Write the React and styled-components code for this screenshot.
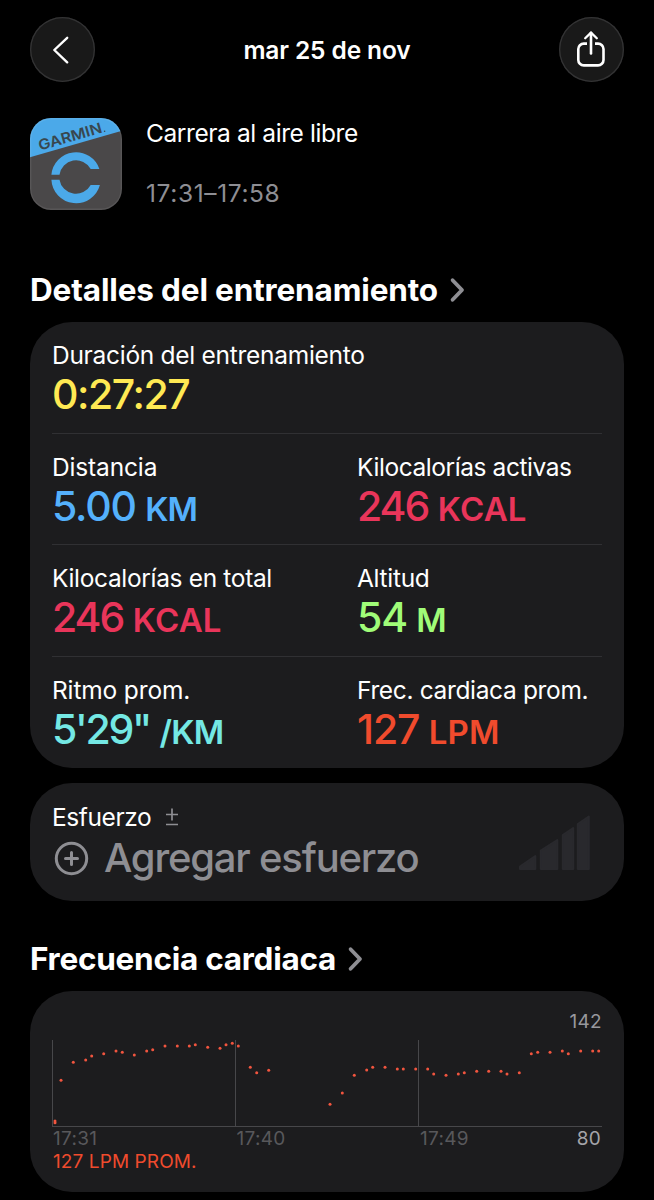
import React from 'react';
import styled, { createGlobalStyle } from 'styled-components';

const GlobalStyle = createGlobalStyle`
    body {
        margin: 0;
        background: #000;
        color: #fff;
        font-family: Inter, "Liberation Sans", sans-serif;
        -webkit-font-smoothing: antialiased;
    }
`;

const Page = styled.main`
    box-sizing: border-box;
    width: 654px;
    height: 1200px;
    padding: 17px 30px 0;
    overflow: hidden;
    background: #000;
`;

const TopBar = styled.header`
    display: flex;
    align-items: center;
    justify-content: space-between;
    height: 65px;
`;

const RoundButton = styled.button`
    width: 65px;
    height: 65px;
    padding: 0;
    border: none;
    border-radius: 50%;
    background: #191919;
    box-shadow: inset 0 0 0 1.3px #333334;

    svg {
        display: block;
    }
`;

const Title = styled.h1`
    margin: 1px 0 0;
    font-size: 24.5px;
    font-weight: 600;
    line-height: 30px;
    letter-spacing: -0.11px;
`;

const Activity = styled.section`
    display: flex;
    gap: 24px;
    margin-top: 36px;
`;

const ActivityText = styled.div`
    display: flex;
    flex-direction: column;
    gap: 30px;
`;

const Text = styled.span`
    font-size: 24.5px;
    line-height: 30px;
    white-space: nowrap;
    color: ${props => props.color || "#fff"};
    letter-spacing: ${props => props.$spacing || 0}px;
`;

const Heading = styled.h2`
    display: flex;
    align-items: center;
    gap: 11px;
    margin: ${props => props.$top}px 0 12px;
    font-size: 31.5px;
    font-weight: 700;
    line-height: 40px;
    letter-spacing: ${props => props.$spacing}px;
`;

const Card = styled.section`
    box-sizing: border-box;
    height: ${props => props.$height}px;
    padding: ${props => props.$top || 0}px 22px 0;
    border-radius: 42px;
    background: #1c1c1e;
`;

const Row = styled.div`
    box-sizing: border-box;
    display: grid;
    grid-template-columns: 305px 1fr;
    height: 111.6px;
    padding-top: 18px;
    border-bottom: 1px solid #303033;

    &:last-child {
        border-bottom: none;
    }
`;

const Metric = styled.div`
    display: flex;
    flex-direction: column;
    white-space: nowrap;
`;

const Value = styled.div`
    display: flex;
    align-items: baseline;
    gap: 9.5px;
    color: ${props => props.color};
    font-size: 41px;
    font-weight: 500;
    line-height: 48px;
    letter-spacing: ${props => props.$spacing}px;
`;

const Unit = styled.span`
    font-size: 33px;
    font-weight: 600;
    letter-spacing: ${props => props.$spacing}px;
`;

const EffortCard = styled(Card)`
    display: flex;
    justify-content: space-between;
    margin-top: 15px;
`;

const EffortLabel = styled.div`
    display: flex;
    align-items: center;
    gap: 14px;
    height: 32px;
`;

const AddEffort = styled.div`
    display: flex;
    align-items: center;
    gap: 14px;
    margin-top: 1px;
    color: #8e8e93;
    font-size: 40px;
    font-weight: 500;
    line-height: 48px;
    letter-spacing: -1.2px;
    white-space: nowrap;
`;

const Bars = styled.svg`
    margin: 13px 11px 0 0;
`;

const Small = styled.div`
    font-size: 19px;
    line-height: 24px;
    white-space: nowrap;
    color: ${props => props.color};
    letter-spacing: ${props => props.$spacing || 0.3}px;
    text-align: ${props => props.$align || "left"};
`;

const Axis = styled.div`
    display: grid;
    grid-template-columns: 183.5px 183.5px 1fr auto;
    padding: 1px 1px 0;
`;

const Average = styled(Small)`
    padding-left: 1px;
    line-height: 22px;
`;

const Plot = styled.svg`
    display: block;
    overflow: visible;
`;

const metrics = [
    [
        { label: "Duración del entrenamiento", ls: -0.28, value: "0:27:27", vs: -1.45, color: "#ffe953" }
    ],
    [
        { label: "Distancia", ls: -0.15, value: "5.00", vs: -1.2, unit: "KM", us: -1, color: "#54b0fb" },
        { label: "Kilocalorías activas", ls: -0.43, value: "246", vs: -2, unit: "KCAL", us: 0.18, color: "#e9355a" }
    ],
    [
        { label: "Kilocalorías en total", ls: -0.34, value: "246", vs: -2, unit: "KCAL", us: 0.18, color: "#e9355a" },
        { label: "Altitud", ls: -0.3, value: "54", vs: -1.2, unit: "M", us: 0, color: "#a0fc78" }
    ],
    [
        { label: "Ritmo prom.", ls: -0.15, value: "5'29\"", vs: -2.3, unit: "/KM", us: -0.7, color: "#74e8e4" },
        { label: "Frec. cardiaca prom.", ls: -0.35, value: "127", vs: -1.14, unit: "LPM", us: 0.1, color: "#f04b2d" }
    ]
];

// x, y inside the 550 x 93 plot
const beats = [
    [3, 87], [3, 88.7], [9, 46.3], [21.3, 28.3], [33.7, 26], [39.7, 22], [51.7, 19.7],
    [64, 17], [70.3, 18.3], [82.3, 21], [94.7, 17], [100.7, 15.7], [113, 12],
    [125.3, 12], [137.3, 12], [143.3, 10.7], [155.7, 13.3], [168, 14.3],
    [174, 10.7], [180.3, 9.3], [186.3, 12], [198.3, 33.3], [204.7, 38.7],
    [216.7, 36.3], [278, 70.3], [290.3, 59], [302.3, 41.3], [314.7, 36],
    [320.7, 33.3], [333, 33.3], [345.3, 35], [351.3, 35], [363.7, 35],
    [375.7, 35], [381.7, 40], [394, 41.3], [406.3, 40], [412.3, 38.7],
    [424.7, 37.3], [436.7, 37.3], [449, 37.3], [455, 40], [467.3, 38.7],
    [479.3, 19.7], [485.7, 18.3], [498, 18.3], [510.3, 17], [516.3, 19.7],
    [528.7, 17], [540.7, 17], [546.7, 17]
];

const BackIcon = () => (
    <svg width="65" height="65" fill="none" stroke="#fff" strokeWidth="2.4" strokeLinecap="round" strokeLinejoin="round">
        <path d="M37.2 20.8 24.3 33 37.2 45.3" />
    </svg>
);

const ShareIcon = () => (
    <svg width="65" height="65" fill="none" stroke="#fff" strokeWidth="2.6" strokeLinecap="round" strokeLinejoin="round">
        <path strokeLinecap="butt" d="M28 26.6h-3.2a5.5 5.5 0 0 0-5.5 5.5v10.8a5.5 5.5 0 0 0 5.5 5.5h14.2a5.5 5.5 0 0 0 5.5-5.5v-10.8a5.5 5.5 0 0 0-5.5-5.5h-3" />
        <path d="M32 36.5V15.8" />
        <path strokeWidth="2.3" d="M26.2 21.3 32 15.6l5.8 5.7" />
    </svg>
);

const Chevron = () => (
    <svg width="16" height="26" fill="none" stroke="#8e8e93" strokeWidth="3.8" strokeLinecap="round" strokeLinejoin="round">
        <path d="M3.6 3.2 13 13l-9.4 9.8" />
    </svg>
);

const GarminIcon = () => (
    <svg width="92" height="92" viewBox="0 0 92 92">
        <clipPath id="tile">
            <rect width="92" height="92" rx="21" />
        </clipPath>
        <g clipPath="url(#tile)">
            <rect width="92" height="92" fill="#4a4849" />
            <path d="M0 0h92v12.7L0 39.3z" fill="#4ba9e9" />
            <rect x=".7" y=".7" width="90.6" height="90.6" rx="20.4" fill="none" stroke="#fff" strokeOpacity=".08" strokeWidth="1.4" />
        </g>
        <text transform="translate(10 32.6) rotate(-16.1)" fill="#38474f" fontFamily="Inter" fontSize="14.5" fontWeight="600" textLength="65.5" lengthAdjust="spacingAndGlyphs">GARMIN</text>
        <circle cx="74.6" cy="13.3" r=".8" fill="#38474f" />
        <g fill="#4ba9e9">
            <path d="M21.4 56.7A24.7 24.7 0 0 1 69.4 51H60.7A16.7 16.7 0 0 0 29.5 56.7z" />
            <path d="M21.4 61.7A24.7 24.7 0 0 0 69.9 67H60.7A16.7 16.7 0 0 1 29.5 61.7z" />
        </g>
    </svg>
);

const EffortBars = () => (
    <Bars width="73" height="58" fill="#29292d" stroke="#29292d" strokeWidth="2" strokeLinejoin="round">
        <path d="M2 52.5 17.3 42V55H2z" />
        <path d="M22.8 36.5 39.3 26V55H22.8z" />
        <path d="M44.8 21 55.2 14V55H44.8z" />
        <path d="M59.8 10 70.8 2.5V55h-11z" />
    </Bars>
);

const MetricCell = ({ item }) => (
    <Metric>
        <Text $spacing={item.ls}>{item.label}</Text>
        <Value color={item.color} $spacing={item.vs}>
            <span>{item.value}</span>
            {item.unit && <Unit $spacing={item.us}>{item.unit}</Unit>}
        </Value>
    </Metric>
);

const HeartChart = () => (
    <Plot width="550" height="92">
        <path d="M.5 6V92M183.5 6V92M366.5 6V92M0 92.5H550" stroke="#47474a" fill="none" />
        {beats.map(([x, y], i) => (
            <circle key={i} cx={x} cy={y} r="1.5" fill="#f2553f" />
        ))}
    </Plot>
);

const App = () => {
    return (
        <>
            <GlobalStyle />
            <Page>
                <TopBar>
                    <RoundButton aria-label="Atrás"><BackIcon /></RoundButton>
                    <Title>mar 25 de nov</Title>
                    <RoundButton aria-label="Compartir"><ShareIcon /></RoundButton>
                </TopBar>
                <Activity>
                    <GarminIcon />
                    <ActivityText>
                        <Text $spacing={-0.41}>Carrera al aire libre</Text>
                        <Text color="#8e8e93" $spacing={0.62}>17:31–17:58</Text>
                    </ActivityText>
                </Activity>

                <Heading $top={60} $spacing={-0.15}>Detalles del entrenamiento <Chevron /></Heading>
                <Card $height={446}>
                    {metrics.map((row, i) => (
                        <Row key={i}>
                            {row.map(item => <MetricCell key={item.label} item={item} />)}
                        </Row>
                    ))}
                </Card>

                <EffortCard $height={118} $top={18}>
                    <div>
                        <EffortLabel>
                            <Text $spacing={-0.4}>Esfuerzo</Text>
                            <svg width="14" height="18" fill="none" stroke="#8e8e93" strokeWidth="1.7">
                                <path d="M1 6.5H13M7 .5V12.5M1 16.5H13" />
                            </svg>
                        </EffortLabel>
                        <AddEffort>
                            <svg width="38" height="38" fill="none" stroke="#8e8e93" strokeWidth="3" strokeLinecap="round">
                                <circle cx="19.5" cy="19.5" r="15.2" />
                                <path d="M13.5 19.5h12M19.5 13.5v12" />
                            </svg>
                            <span>Agregar esfuerzo</span>
                        </AddEffort>
                    </div>
                    <EffortBars />
                </EffortCard>

                <Heading $top={38} $spacing={-0.26}>Frecuencia cardiaca <Chevron /></Heading>
                <Card $height={201} $top={19}>
                    <Small color="#98989d" $align="right">142</Small>
                    <HeartChart />
                    <Axis>
                        <Small color="#58585b">17:31</Small>
                        <Small color="#58585b">17:40</Small>
                        <Small color="#58585b">17:49</Small>
                        <Small color="#a4a4a9">80</Small>
                    </Axis>
                    <Average color="#f04b2d" $spacing={0.1}>127 LPM PROM.</Average>
                </Card>
            </Page>
        </>
    );
};

export default App;
